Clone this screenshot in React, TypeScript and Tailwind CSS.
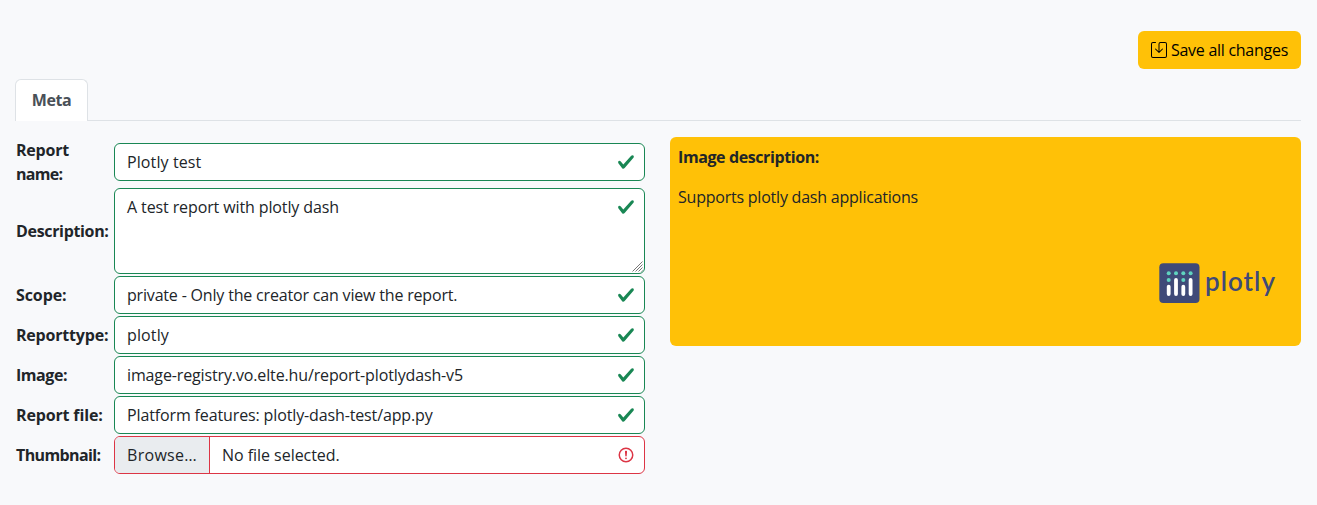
import type { ReactNode } from "react";
import { BsSave } from "react-icons/bs";

function CheckMark() {
  return (
    <svg viewBox="0 0 8 8" className="size-[18px] shrink-0" aria-hidden="true">
      <path
        fill="#198754"
        d="M2.3 6.73.6 4.53c-.4-1.04.46-1.4 1.1-.8l1.1 1.4 3.4-3.8c.6-.63 1.6-.27 1.2.7l-4 4.6c-.43.5-.8.4-1.1.1z"
      />
    </svg>
  );
}

function InvalidMark() {
  return (
    <svg viewBox="0 0 12 12" className="size-[18px] shrink-0" fill="none" stroke="#dc3545" aria-hidden="true">
      <circle cx="6" cy="6" r="4.5" />
      <path strokeLinejoin="round" d="M5.8 3.6h.4L6 6.5z" />
      <circle cx="6" cy="8.2" r=".6" fill="#dc3545" stroke="none" />
    </svg>
  );
}

function ResizeGrip() {
  return (
    <svg viewBox="0 0 11 11" className="absolute right-px bottom-px size-[11px]" stroke="#777" strokeWidth="1" aria-hidden="true">
      <path d="M0.5 10.5 10.5 0.5M3.5 10.5 10.5 3.5M6.5 10.5 10.5 6.5M9.5 10.5 10.5 9.5" />
    </svg>
  );
}

function PlotlyLogo() {
  return (
    <div className="flex items-center">
      <svg viewBox="0 0 41 40" className="h-10 w-[41px] shrink-0" aria-hidden="true">
        <rect x="0.3" y="0.3" width="40.2" height="39.7" rx="4" fill="#3f4a78" />
        <g fill="#5fd3bf">
          <circle cx="9.7" cy="10.3" r="2" />
          <circle cx="17" cy="10.3" r="2" />
          <circle cx="24.3" cy="10.3" r="2" />
          <circle cx="31.6" cy="10.3" r="2" />
          <circle cx="9.7" cy="17" r="2" />
          <circle cx="24.3" cy="17" r="2" />
        </g>
        <g fill="#fff">
          <rect x="7.8" y="21.8" width="3.8" height="11.2" rx="1.9" />
          <rect x="15.1" y="15" width="3.8" height="18" rx="1.9" />
          <rect x="22.4" y="21.8" width="3.8" height="11.2" rx="1.9" />
          <rect x="29.7" y="15" width="3.8" height="18" rx="1.9" />
        </g>
      </svg>
      <span className="-mt-1 ml-[5px] h-10 font-['Lato',sans-serif] text-[26px] leading-10 font-semibold tracking-[1px] text-[#3f4a78]">
        plotly
      </span>
    </div>
  );
}

type RowProps = { label: ReactNode; labelClass: string; children: ReactNode; rowClass: string };

function Row({ label, labelClass, rowClass, children }: RowProps) {
  return (
    <div className={`flex items-center ${rowClass}`}>
      <div className={`w-[99px] shrink-0 pl-px font-bold whitespace-nowrap ${labelClass}`}>{label}</div>
      {children}
    </div>
  );
}

function Field({ value, valueClass }: { value: string; valueClass: string }) {
  return (
    <div className="flex h-[38px] flex-1 items-center justify-between rounded-md border border-[#198754] bg-white pr-[9px] pl-3">
      <span className={`whitespace-nowrap ${valueClass}`}>{value}</span>
      <CheckMark />
    </div>
  );
}

export default function App() {
  return (
    <main className="h-[505px] bg-[#f8f9fb] pt-[31px] pr-4 pl-[15px] font-['Open_Sans',sans-serif] text-base leading-6 text-[#212529]">
      <div className="flex justify-end">
        <button className="flex h-[38px] w-[163px] items-center gap-1 rounded-md bg-[#ffc107] pl-[13px] text-black">
          <BsSave className="size-4 shrink-0" />
          <span className="tracking-[-0.275px] whitespace-nowrap">Save all changes</span>
        </button>
      </div>

      <nav className="mt-[10px] flex h-[42px] border-b border-[#dee2e6]">
        <div className="-mb-px flex h-[42px] w-[73px] items-center justify-center rounded-t-md border border-b-0 border-[#dee2e6] bg-white pb-0.5 font-bold tracking-[-0.41px] text-[#495057]">
          Meta
        </div>
      </nav>

      <div className="mt-4 flex items-start justify-between">
        <section className="w-[630px]">
          <Row
            rowClass="h-[50px]"
            labelClass=""
            label={
              <>
                <div className="tracking-[-0.21px]">Report</div>
                <div className="tracking-[-0.68px]">name:</div>
              </>
            }
          >
            <Field value="Plotly test" valueClass="tracking-[0.1px]" />
          </Row>
          <Row rowClass="h-[88px]" label="Description:" labelClass="tracking-[-0.33px]">
            <div className="relative flex h-[86px] flex-1 justify-between rounded-md border border-[#198754] bg-white pr-[9px] pl-3">
              <span className="pt-1.5 tracking-[-0.113px] whitespace-nowrap">A test report with plotly dash</span>
              <div className="pt-[9px]">
                <CheckMark />
              </div>
              <ResizeGrip />
            </div>
          </Row>
          <Row rowClass="h-10" label="Scope:" labelClass="tracking-[-0.1px]">
            <Field value="private - Only the creator can view the report." valueClass="tracking-[-0.18px]" />
          </Row>
          <Row rowClass="h-10" label="Reporttype:" labelClass="tracking-[-0.2px]">
            <Field value="plotly" valueClass="tracking-[0.13px]" />
          </Row>
          <Row rowClass="h-10" label="Image:" labelClass="tracking-[-0.45px]">
            <Field value="image-registry.vo.elte.hu/report-plotlydash-v5" valueClass="tracking-[-0.132px]" />
          </Row>
          <Row rowClass="h-10" label="Report file:" labelClass="tracking-[-0.15px]">
            <Field value="Platform features: plotly-dash-test/app.py" valueClass="tracking-[-0.13px]" />
          </Row>
          <Row rowClass="h-10" label="Thumbnail:" labelClass="tracking-[-0.62px]">
            <div className="flex h-[38px] flex-1 items-center overflow-hidden rounded-md border border-[#dc3545] bg-white pr-[9px]">
              <div className="flex h-full w-[95px] shrink-0 items-center border-r border-[#dc3545] bg-[#e9ecef] pl-3 tracking-[0.3px]">
                Browse…
              </div>
              <span className="flex-1 pl-3 tracking-[-0.04px]">No file selected.</span>
              <InvalidMark />
            </div>
          </Row>
        </section>

        <aside className="flex h-[209px] w-[631px] flex-col rounded-md bg-[#ffc107] px-2 pt-2">
          <h2 className="font-bold tracking-[-0.4px]">Image description:</h2>
          <p className="mt-4 tracking-[-0.223px]">Supports plotly dash applications</p>
          <div className="mt-[54px] ml-[481px]">
            <PlotlyLogo />
          </div>
        </aside>
      </div>
    </main>
  );
}
